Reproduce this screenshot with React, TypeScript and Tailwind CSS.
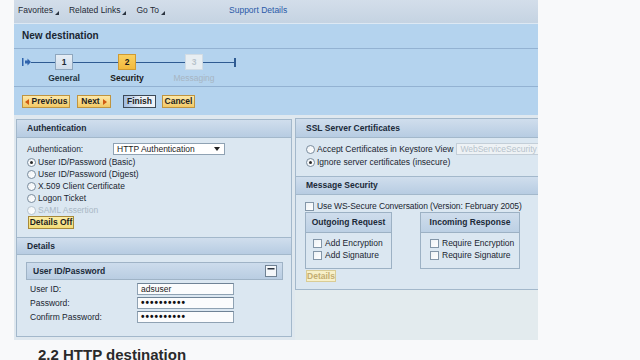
import React from 'react';

function MenuCorner() {
  return (
    <svg width="4" height="4" viewBox="0 0 4 4" className="mt-[5px]">
      <polygon points="4,0 4,4 0,4" fill="#2b3440" />
    </svg>
  );
}

function Radio({ checked, disabled }: { checked?: boolean; disabled?: boolean }) {
  return (
    <span
      className={`w-[9px] h-[9px] shrink-0 rounded-full border flex items-center justify-center bg-linear-to-br from-[#eef2f5] to-white ${
        disabled ? 'border-[#b8c5d0]' : 'border-[#7b8d9e]'
      }`}
    >
      {checked && <span className="w-[3px] h-[3px] rounded-full bg-[#2a2a2a]" />}
    </span>
  );
}

function Check() {
  return <span className="w-[9px] h-[9px] shrink-0 border border-[#8396a8] bg-linear-to-br from-[#eef2f5] to-white" />;
}

function Step({ n, label, state }: { n: string; label: string; state: 'done' | 'active' | 'todo' }) {
  const box =
    state === 'active'
      ? 'bg-linear-to-b from-[#f9d060] to-[#f2b93c] border-[#cf9a32] text-[#1a1a1a]'
      : state === 'done'
      ? 'bg-linear-to-b from-[#e6eef6] to-[#cfdcea] border-[#8fa7be] text-[#1c2834]'
      : 'bg-[#e8eef2] border-[#d2dce4] text-[#b8c3cc]';
  const text =
    state === 'todo' ? 'text-[#a7b5c2]' : state === 'active' ? 'font-bold text-[#1a1a1a]' : 'font-bold text-[#24333f]';
  return (
    <div className="w-[18px] flex flex-col items-center">
      <div className={`w-[18px] h-[16px] border flex items-center justify-center font-bold ${box}`}>{n}</div>
      <div className={`mt-[4px] whitespace-nowrap ${text}`}>{label}</div>
    </div>
  );
}

function Line({ w }: { w: string }) {
  return <div className={`${w} h-px mt-[8px] bg-[#2f5b92]`} />;
}

function YellowButton({ children, w }: { children: React.ReactNode; w: string }) {
  return (
    <div
      className={`${w} h-[13px] flex items-center justify-center gap-[3px] border border-[#bf9440] bg-linear-to-b from-[#fde8a8] to-[#f2c965] font-bold text-[#1e1e1e]`}
    >
      {children}
    </div>
  );
}

function Input({ value, w, dots }: { value: string; w: string; dots?: boolean }) {
  return (
    <div className={`${w} h-[12px] border border-[#8fa2b3] border-t-[#6f8396] bg-[#fbfcfd] flex items-center pl-[3px]`}>
      {dots ? (
        <span className="text-[10px] font-bold tracking-[1px] text-[#111] leading-none">••••••••••</span>
      ) : (
        <span className="text-[#1d1d1d]">{value}</span>
      )}
    </div>
  );
}

function PanelHeader({ title, h }: { title: string; h: string }) {
  return (
    <div
      className={`${h} flex items-center pl-[10px] border-b border-[#a3b8cb] bg-linear-to-b from-[#d0deed] to-[#b7cce2] font-bold text-[#1b2a39]`}
    >
      {title}
    </div>
  );
}

export default function App() {
  const authOptions = [
    { label: 'User ID/Password (Basic)', checked: true },
    { label: 'User ID/Password (Digest)' },
    { label: 'X.509 Client Certificate' },
    { label: 'Logon Ticket' },
    { label: 'SAML Assertion', disabled: true },
  ];

  return (
    <div className="w-[640px] h-[360px] overflow-hidden bg-[#f8f9fa] font-['Liberation_Sans',Arial,sans-serif] text-[8.5px] leading-none text-[#1f2b37]">
      <div className="ml-[14px] w-[524px]">
        {/* Top menu */}
        <div className="h-[24px] flex items-center pb-[3px] pl-[4px] bg-linear-to-b from-[#d3deea] to-[#c5d3e2] border-b border-[#dde8f3] text-[#1f2a35]">
          <span>Favorites</span>
          <span className="ml-[2px]"><MenuCorner /></span>
          <span className="ml-[10px]">Related Links</span>
          <span className="ml-[2px]"><MenuCorner /></span>
          <span className="ml-[10px]">Go To</span>
          <span className="ml-[2px]"><MenuCorner /></span>
          <span className="ml-[64px] text-[#2a5aa8]">Support Details</span>
        </div>

        {/* Header */}
        <div className="bg-[#b4d3ee]">
          <div className="h-[25px] flex items-center pl-[8px] border-b border-[#93b2d2] text-[10px] font-bold text-[#1a2632]">
            New destination
          </div>

          <div className="h-[38px] flex items-start pt-[5px] pl-[8px] border-b border-[#93b2d2]">
            <svg width="9" height="8" viewBox="0 0 9 8" className="mt-[4px]">
              <rect x="0" y="0" width="1.5" height="8" fill="#2f64ad" />
              <polygon points="3,2.5 5.5,2.5 5.5,0.5 9,4 5.5,7.5 5.5,5.5 3,5.5" fill="#2f64ad" />
            </svg>
            <Line w="w-[24px]" />
            <Step n="1" label="General" state="done" />
            <Line w="w-[45px]" />
            <Step n="2" label="Security" state="active" />
            <Line w="w-[49px]" />
            <Step n="3" label="Messaging" state="todo" />
            <Line w="w-[31px]" />
            <svg width="3" height="9" viewBox="0 0 3 9" className="mt-[4px]">
              <rect x="0" y="0" width="2" height="9" fill="#2f5b92" />
            </svg>
          </div>

          <div className="h-[28px] flex items-start pt-[8px] pl-[8px]">
            <YellowButton w="w-[48px]">
              <svg width="4" height="6" viewBox="0 0 4 6"><polygon points="4,0 4,6 0,3" fill="#cf5a12" /></svg>
              Previous
            </YellowButton>
            <div className="ml-[7px]">
              <YellowButton w="w-[34px]">
                Next
                <svg width="4" height="6" viewBox="0 0 4 6"><polygon points="0,0 4,3 0,6" fill="#cf5a12" /></svg>
              </YellowButton>
            </div>
            <div className="ml-[12px] w-[33px] h-[13px] border border-[#3d4a58] bg-linear-to-r from-[#9fbbe0] via-[#e9eff6] to-[#eef3f8] flex items-center justify-center font-bold text-[#1e1e1e]">
              Finish
            </div>
            <div className="ml-[6px]">
              <YellowButton w="w-[33px]">Cancel</YellowButton>
            </div>
          </div>
        </div>

        {/* Content */}
        <div className="h-[225px] flex gap-[3px] pl-[2px] pt-[3px] bg-[#dfe8ef]">
          {/* Left column */}
          <div className="w-[276px] flex flex-col">
            <div className="mt-px h-[119px] border border-[#a3b8cb] bg-[#dbe7f1]">
              <PanelHeader title="Authentication" h="h-[18px]" />
              <div className="pl-[10px] pt-[5px]">
                <div className="h-[12px] flex items-center">
                  <span className="w-[86px]">Authentication:</span>
                  <div className="w-[112px] h-[12px] border border-[#8fa2b3] bg-white flex items-center justify-between pl-[3px] pr-[4px] text-[#1d1d1d]">
                    <span>HTTP Authentication</span>
                    <svg width="6" height="4" viewBox="0 0 6 4"><polygon points="0,0 6,0 3,4" fill="#222" /></svg>
                  </div>
                </div>
                <div className="mt-px">
                  {authOptions.map((o) => (
                    <div key={o.label} className="h-[12px] flex items-center gap-[2px]">
                      <Radio checked={o.checked} disabled={o.disabled} />
                      <span className={o.disabled ? 'text-[#a9b8c5]' : 'text-[#1a2530]'}>{o.label}</span>
                    </div>
                  ))}
                </div>
                <div className="ml-px w-[46px] h-[13px] border border-[#a88a3a] bg-linear-to-b from-[#fbeda6] to-[#f3dc78] flex items-center justify-center font-bold text-[#1e1e1e]">
                  Details Off
                </div>
              </div>
            </div>

            <div className="h-[99px] border border-t-0 border-[#a3b8cb] bg-[#dbe7f1]">
              <PanelHeader title="Details" h="h-[17px]" />
              <div className="ml-[9px] mr-[8px] mt-[7px] h-[18px] border border-[#9fb3c6] bg-linear-to-b from-[#cddcec] to-[#b9cde2] flex items-center justify-between pl-[6px] pr-[5px]">
                <span className="font-bold text-[#1b2a39]">User ID/Password</span>
                <svg width="12" height="12" viewBox="0 0 12 12">
                  <rect x="0.5" y="0.5" width="11" height="11" fill="#f4f7fa" stroke="#6f8193" />
                  <rect x="2.5" y="3" width="7" height="1.5" fill="#2b3440" />
                </svg>
              </div>
              <div className="pl-[13px] mt-[2px]">
                {[
                  { label: 'User ID:', value: 'adsuser' },
                  { label: 'Password:', value: '', dots: true },
                  { label: 'Confirm Password:', value: '', dots: true },
                ].map((r) => (
                  <div key={r.label} className="h-[14px] flex items-center">
                    <span className="w-[107px] text-[#1a2530]">{r.label}</span>
                    <Input value={r.value} w="w-[97px]" dots={r.dots} />
                  </div>
                ))}
              </div>
            </div>
          </div>

          {/* Right column */}
          <div className="w-[243px] bg-[#e3ebee] flex flex-col">
            <div className="h-[59px] border border-r-0 border-[#a3b8cb] bg-[#dbe7f1] overflow-hidden">
              <PanelHeader title="SSL Server Certificates" h="h-[19px]" />
              <div className="pl-[10px] pt-[5px]">
                <div className="h-[12px] flex items-center gap-[2px] whitespace-nowrap">
                  <Radio />
                  <span className="text-[#1a2530]">Accept Certificates in Keystore View</span>
                  <div className="ml-[1px] w-[90px] h-[12px] shrink-0 border border-[#c3ced8] bg-[#eef2f5] flex items-center pl-[3px] text-[#b6c2cc]">
                    WebServiceSecurity
                  </div>
                </div>
                <div className="mt-px h-[12px] flex items-center gap-[2px]">
                  <Radio checked />
                  <span className="text-[#1a2530]">Ignore server certificates (insecure)</span>
                </div>
              </div>
            </div>

            <div className="h-[113px] border border-t-0 border-r-0 border-[#a3b8cb] bg-[#dbe7f1]">
              <PanelHeader title="Message Security" h="h-[18px]" />
              <div className="pt-[5px]">
                <div className="pl-[9px] h-[12px] flex items-center gap-[3px] whitespace-nowrap">
                  <Check />
                  <span className="text-[#1a2530] tracking-[-0.1px]">Use WS-Secure Conversation (Version: February 2005)</span>
                </div>
                <div className="pl-[9px] flex gap-[28px]">
                  {[
                    { title: 'Outgoing Request', w: 'w-[87px]', pl: 'pl-[7px]', items: ['Add Encryption', 'Add Signature'] },
                    { title: 'Incoming Response', w: 'w-[100px]', pl: 'pl-[9px]', items: ['Require Encryption', 'Require Signature'] },
                  ].map((b) => (
                    <div key={b.title} className={`${b.w} h-[57px] border border-[#9cb1c4]`}>
                      <div className="h-[20px] border-b border-[#9cb1c4] bg-linear-to-b from-[#cfddec] to-[#bcd0e4] flex items-center justify-center font-bold text-[#1b2a39]">
                        {b.title}
                      </div>
                      <div className={`${b.pl} pt-[4px]`}>
                        {b.items.map((it) => (
                          <div key={it} className="h-[12px] flex items-center gap-[3px] whitespace-nowrap">
                            <Check />
                            <span className="text-[#1a2530]">{it}</span>
                          </div>
                        ))}
                      </div>
                    </div>
                  ))}
                </div>
                <div className="ml-[10px] mt-px w-[30px] h-[12px] border border-[#d9cc96] bg-[#f7f0c9] flex items-center justify-center font-bold text-[#c3ad72]">
                  Details
                </div>
              </div>
            </div>
          </div>
        </div>
      </div>

      <h2 className="mt-[7px] pl-[38px] text-[15px] leading-[15px] font-bold text-[#2a2a2a]">2.2 HTTP destination</h2>
    </div>
  );
}
